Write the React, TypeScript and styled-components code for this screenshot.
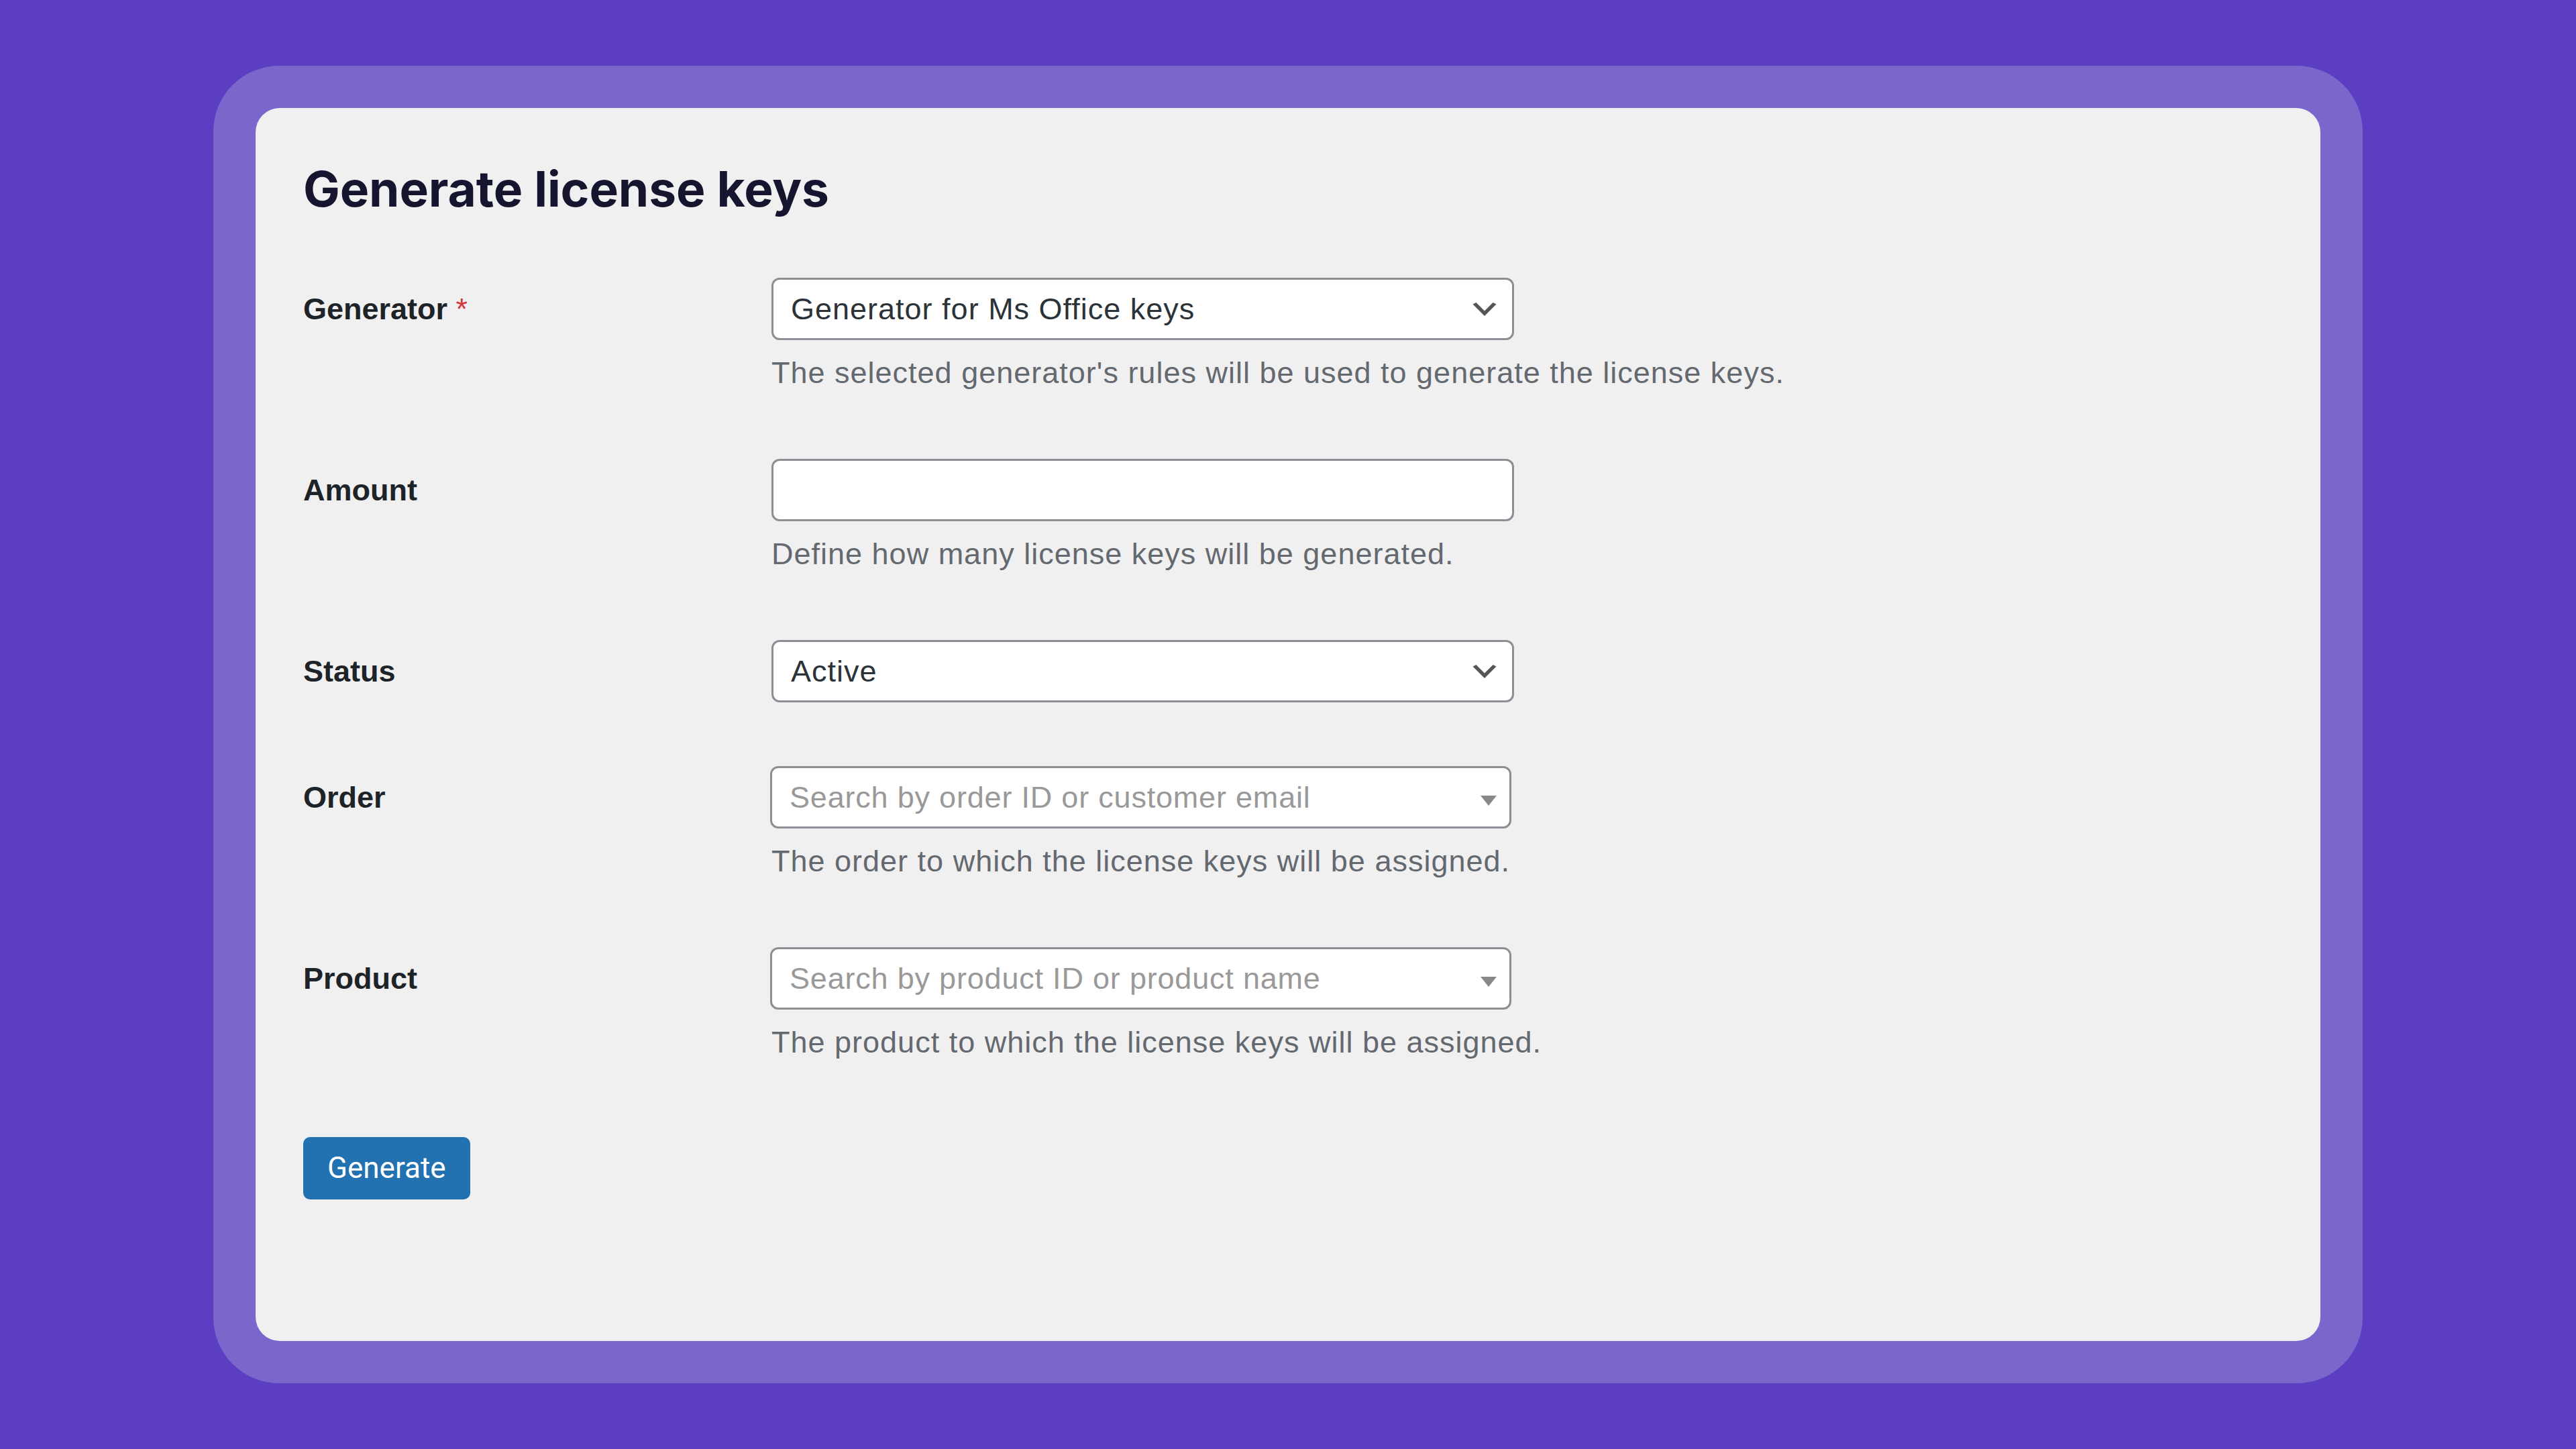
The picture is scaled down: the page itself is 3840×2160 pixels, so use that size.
import React from "react";
import styled, { createGlobalStyle } from "styled-components";

const GlobalStyle = createGlobalStyle`
  html, body {
    margin: 0;
    padding: 0;
    background: #5b3ec1;
  }
  * { box-sizing: border-box; }
`;

const Page = styled.div`
  width: 3840px;
  height: 2160px;
  display: flex;
  align-items: center;
  justify-content: center;
  background: #5b3ec1;
`;

const Frame = styled.div`
  width: 3204px;
  height: 1964px;
  padding: 63px;
  background: #7b66cc;
  border-radius: 98px;
  display: flex;
`;

const Card = styled.div`
  flex: 1;
  background: #f0f0f1;
  border-radius: 36px;
  padding: 74px 71px;
  display: flex;
  flex-direction: column;
  font-family: "Liberation Sans", Arial, sans-serif;
`;

const Title = styled.h1`
  margin: 0 0 37px 0;
  font-family: Inter, "Noto Sans", sans-serif;
  font-weight: 700;
  font-size: 73px;
  line-height: 1.3;
  color: #16152f;
  letter-spacing: -0.1px;
`;

const Form = styled.div`
  display: flex;
  flex-direction: column;
`;

const Row = styled.div`
  display: grid;
  grid-template-columns: 698px 1107px;
  padding: 47.5px 0;
`;

const Label = styled.label`
  height: 93px;
  display: flex;
  align-items: center;
  white-space: pre;
  font-size: 45px;
  font-weight: 700;
  color: #1d2327;
`;

const Required = styled.span`
  color: #d63638;
  font-weight: 400;
`;

const Field = styled.div`
  display: flex;
  flex-direction: column;
`;

const Box = styled.div<{ $variant?: "select" | "search" | "input" }>`
  height: 93px;
  width: ${(p) => (p.$variant === "search" ? "1105px" : "1107px")};
  background: #fff;
  border: 3px solid #8c8f94;
  border-radius: 12px;
  display: flex;
  align-items: center;
  justify-content: space-between;
  padding: ${(p) =>
    p.$variant === "search" ? "0 19px 0 26px" : p.$variant === "select" ? "0 16px 0 26px" : "0 26px"};
  font-size: 45px;
  letter-spacing: ${(p) => (p.$variant === "search" ? "0.8px" : "1px")};
  white-space: nowrap;
  color: ${(p) => (p.$variant === "search" ? "#999" : "#2c3338")};
  ${(p) => (p.$variant === "search" ? "margin-left: -2px;" : "")}
`;

const Arrow = styled.span`
  width: 0;
  height: 0;
  border-style: solid;
  border-width: 15px 12.5px 0 12.5px;
  border-color: #888 transparent transparent transparent;
  margin-top: 9px;
`;

const Description = styled.p`
  margin: 16px 0 0 0;
  font-size: 45px;
  letter-spacing: 1px;
  line-height: 66px;
  color: #646970;
  white-space: nowrap;
`;

const Button = styled.button`
  margin-top: 60px;
  align-self: flex-start;
  height: 93px;
  padding: 0 33px;
  background: #2271b1;
  border: 3px solid #2271b1;
  border-radius: 10px;
  color: #fff;
  font-family: Roboto, "Liberation Sans", sans-serif;
  font-size: 44px;
  cursor: pointer;
`;

const Chevron = () => (
  <svg width="50" height="50" viewBox="0 0 20 20" aria-hidden="true">
    <path d="M5 6l5 5 5-5 2 1-7 7-7-7 2-1z" fill="#555" />
  </svg>
);

type RowDef = {
  label: string;
  required?: boolean;
  kind: "select" | "search" | "input";
  value?: string;
  description?: string;
};

const rows: RowDef[] = [
  {
    label: "Generator",
    required: true,
    kind: "select",
    value: "Generator for Ms Office keys",
    description: "The selected generator's rules will be used to generate the license keys.",
  },
  {
    label: "Amount",
    kind: "input",
    value: "",
    description: "Define how many license keys will be generated.",
  },
  { label: "Status", kind: "select", value: "Active" },
  {
    label: "Order",
    kind: "search",
    value: "Search by order ID or customer email",
    description: "The order to which the license keys will be assigned.",
  },
  {
    label: "Product",
    kind: "search",
    value: "Search by product ID or product name",
    description: "The product to which the license keys will be assigned.",
  },
];

export default function App() {
  return (
    <>
      <GlobalStyle />
      <Page>
        <Frame>
          <Card>
            <Title>Generate license keys</Title>
            <Form>
              {rows.map((r) => (
                <Row key={r.label}>
                  <Label>
                    {r.label}
                    {r.required && <Required> *</Required>}
                  </Label>
                  <Field>
                    <Box $variant={r.kind}>
                      <span>{r.value}</span>
                      {r.kind === "select" && <Chevron />}
                      {r.kind === "search" && <Arrow />}
                    </Box>
                    {r.description && <Description>{r.description}</Description>}
                  </Field>
                </Row>
              ))}
            </Form>
            <Button>Generate</Button>
          </Card>
        </Frame>
      </Page>
    </>
  );
}
